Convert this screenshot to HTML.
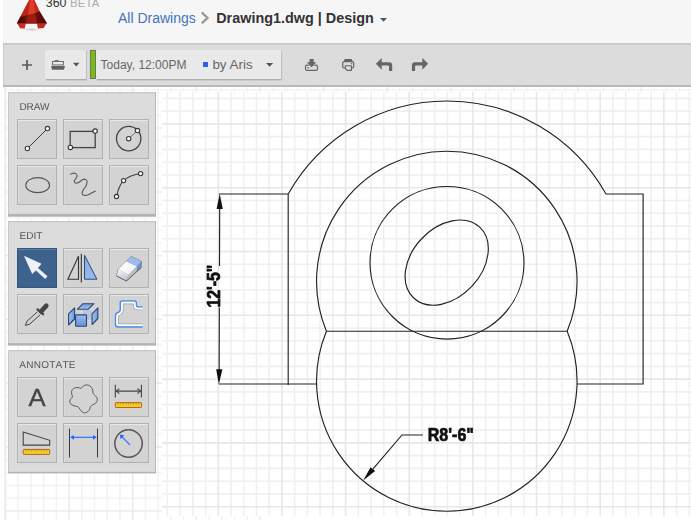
<!DOCTYPE html>
<html lang="en">
<head>
<meta charset="utf-8">
<title>AutoCAD 360 - Drawing1.dwg</title>
<style>
html,body{margin:0;padding:0;}
body{width:691px;height:520px;overflow:hidden;background:#fff;position:relative;font-family:"Liberation Sans",Arial,sans-serif;}
.abs{position:absolute;}
#cv{position:absolute;left:0;top:0;width:691px;height:520px;}
#header{position:absolute;left:3px;top:0;width:688px;height:43px;background:#f6f6f6;}
#hline{position:absolute;left:3px;top:42.5px;width:688px;height:2px;background:#cbcbcb;}
#toolbar{position:absolute;left:3px;top:44.5px;width:688px;height:40px;background:#dcdcdc;border-bottom:2px solid #b9b9b9;box-shadow:inset 1px 0 0 #cdcdcd;}
.t{position:absolute;white-space:nowrap;line-height:1;}
.tbtn{position:absolute;top:50px;height:29px;background:#e9e9e9;box-shadow:0.5px 1px 1.5px rgba(0,0,0,0.35);}
.panel{position:absolute;left:8px;width:146px;height:120px;border:1px solid transparent;}
.plabel{position:absolute;left:10.5px;top:8.4px;font-size:10px;line-height:10px;color:#555;transform:scale(1,0.96);transform-origin:0 100%;}
.b{position:absolute;width:38px;height:38px;background:#d3d3d3;border:1px solid #b2b2b2;box-shadow:inset 0 1px 0 rgba(255,255,255,0.5), inset 1px 0 0 rgba(255,255,255,0.15);}
.b svg{position:absolute;left:-1px;top:-1px;width:40px;height:40px;overflow:visible;}
.c1{left:8px}.c2{left:54px}.c3{left:100px}
.r1{top:26px}.r2{top:72px}
.sel{background:#3d628d;border-color:#33557e;box-shadow:inset 0 1px 0 rgba(255,255,255,0.18);}
</style>
</head>
<body>
<svg id="cv" viewBox="0 0 691 520">
<rect x="0" y="0" width="691" height="520" fill="#fff"/>
<path d="M18.22 86V520M30.94 86V520M43.66 86V520M56.38 86V520M81.82 86V520M94.54 86V520M107.26 86V520M119.98 86V520M145.42 86V520M158.14 86V520M170.86 86V520M183.58 86V520M209.02 86V520M221.74 86V520M234.46 86V520M247.18 86V520M272.62 86V520M285.34 86V520M298.06 86V520M310.78 86V520M336.22 86V520M348.94 86V520M361.66 86V520M374.38 86V520M399.82 86V520M412.54 86V520M425.26 86V520M437.98 86V520M463.42 86V520M476.14 86V520M488.86 86V520M501.58 86V520M527.02 86V520M539.74 86V520M552.46 86V520M565.18 86V520M590.62 86V520M603.34 86V520M616.06 86V520M628.78 86V520M654.22 86V520M666.94 86V520M679.66 86V520M4.5 89.82H691M4.5 102.58H691M4.5 115.34H691M4.5 140.86H691M4.5 153.62H691M4.5 166.38H691M4.5 179.14H691M4.5 204.66H691M4.5 217.42H691M4.5 230.18H691M4.5 242.94H691M4.5 268.46H691M4.5 281.22H691M4.5 293.98H691M4.5 306.74H691M4.5 332.26H691M4.5 345.02H691M4.5 357.78H691M4.5 370.54H691M4.5 396.06H691M4.5 408.82H691M4.5 421.58H691M4.5 434.34H691M4.5 459.86H691M4.5 472.62H691M4.5 485.38H691M4.5 498.14H691" stroke="#f3f3f3" stroke-width="1.5" fill="none"/>
<path d="M5.5 86V520M69.1 86V520M132.7 86V520M196.3 86V520M259.9 86V520M323.5 86V520M387.1 86V520M450.7 86V520M514.3 86V520M577.9 86V520M641.5 86V520M4.5 128.1H691M4.5 191.9H691M4.5 255.7H691M4.5 319.5H691M4.5 383.3H691M4.5 447.1H691M4.5 510.9H691" stroke="#ebebeb" stroke-width="1.5" fill="none"/>
<rect x="0" y="86" width="4.4" height="434" fill="#fff"/>
<rect x="4.2" y="86" width="1.2" height="434" fill="#eeeeee"/>
<rect x="162" y="92" width="529" height="424" fill="#fff"/>
<rect x="264" y="516" width="427" height="4" fill="#fff"/>
<path d="M167.38 92V516M180.11 92V516M192.84 92V516M205.57 92V516M231.03 92V516M243.76 92V516M256.49 92V516M269.22 92V516M294.68 92V516M307.41 92V516M320.14 92V516M332.87 92V516M358.33 92V516M371.06 92V516M383.79 92V516M396.52 92V516M421.98 92V516M434.71 92V516M447.44 92V516M460.17 92V516M485.63 92V516M498.36 92V516M511.09 92V516M523.82 92V516M549.28 92V516M562.01 92V516M574.74 92V516M587.47 92V516M612.93 92V516M625.66 92V516M638.39 92V516M651.12 92V516M676.58 92V516M689.31 92V516M162 98.38H691M162 111.14H691M162 136.66H691M162 149.42H691M162 162.18H691M162 174.94H691M162 200.46H691M162 213.22H691M162 225.98H691M162 238.74H691M162 264.26H691M162 277.02H691M162 289.78H691M162 302.54H691M162 328.06H691M162 340.82H691M162 353.58H691M162 366.34H691M162 391.86H691M162 404.62H691M162 417.38H691M162 430.14H691M162 455.66H691M162 468.42H691M162 481.18H691M162 493.94H691" stroke="#f0f0f0" stroke-width="1.6" fill="none"/>
<path d="M218.3 92V516M281.95 92V516M345.6 92V516M409.25 92V516M472.9 92V516M536.55 92V516M600.2 92V516M663.85 92V516M162 123.9H691M162 187.7H691M162 251.5H691M162 315.3H691M162 379.1H691M162 442.9H691M162 506.7H691" stroke="#e7e7e7" stroke-width="1.6" fill="none"/>
<path d="M219 194H288.2M288.2 194A182.23 182.23 0 0 1 606 194H643.1V384H577.02M288.2 194V385M219 384H316.58M326.43 331.25A130.25 130.25 0 1 1 567.17 331.25M326.43 331.25A130.25 130.25 0 1 0 567.17 331.25M326.43 331.25H567.17" stroke="#222" stroke-width="1.15" fill="none"/>
<ellipse cx="447" cy="262.8" rx="77" ry="76.3" stroke="#222" stroke-width="1.15" fill="none"/>
<ellipse cx="446.7" cy="262.6" rx="48.4" ry="34.6" transform="rotate(-47 446.7 262.6)" stroke="#222" stroke-width="1.15" fill="none"/>
<path d="M219.7 200L219.5 266M219.35 307.5L219.1 378" stroke="#222" stroke-width="1.15" fill="none"/>
<path d="M219.7 193.8L216.6 209H222.8ZM218.8 384.5L216.2 369.2H222.4Z" fill="#111"/>
<path d="M372.82 469.15L402 435H422.9" stroke="#222" stroke-width="1.15" fill="none"/>
<path d="M363.2 480.4L375.1 471.1L370.53 467.2Z" fill="#111"/>
<rect x="8" y="92.2" width="148" height="124.5" fill="#b3b3b3"/><rect x="8" y="92.2" width="148" height="121.6" fill="#c8c8c8"/><rect x="9" y="93.2" width="146" height="120.6" fill="#dcdcdc"/><rect x="155" y="92.2" width="1" height="121.6" fill="#b6b6b6"/>
<rect x="8" y="221.3" width="148" height="124.3" fill="#b3b3b3"/><rect x="8" y="221.3" width="148" height="121.8" fill="#c8c8c8"/><rect x="9" y="222.3" width="146" height="120.8" fill="#dcdcdc"/><rect x="155" y="221.3" width="1" height="121.8" fill="#b6b6b6"/>
<rect x="8" y="350.3" width="148" height="123.1" fill="#b3b3b3"/><rect x="8" y="350.3" width="148" height="121.4" fill="#c8c8c8"/><rect x="9" y="351.3" width="146" height="120.4" fill="#dcdcdc"/><rect x="155" y="350.3" width="1" height="121.4" fill="#b6b6b6"/>
</svg>
<svg id="cvt" viewBox="0 0 691 520" style="position:absolute;left:0;top:0;width:691px;height:520px;will-change:transform;">
<text transform="translate(219.8 307.5) rotate(-90) scale(1 1.21)" font-family="Liberation Sans, Arial, sans-serif" font-weight="bold" font-size="15.8" fill="#111" stroke="#111" stroke-width="0.6">12'-5"</text>
<text transform="translate(427.8 441.2) scale(1.015 1.21)" font-family="Liberation Sans, Arial, sans-serif" font-weight="bold" font-size="15.8" fill="#111" stroke="#111" stroke-width="0.6">R8'-6"</text>
</svg>

<div id="header">
  <svg class="abs" style="left:12px;top:0" width="40" height="34" viewBox="15 0 40 34">
    <defs><linearGradient id="lgd" x1="0" y1="0" x2="1" y2="0"><stop offset="0" stop-color="#3d0704"/><stop offset="1" stop-color="#74130b"/></linearGradient>
    <linearGradient id="lgr" x1="0" y1="0" x2="1" y2="0"><stop offset="0" stop-color="#6a100a"/><stop offset="1" stop-color="#4a0905"/></linearGradient>
    <radialGradient id="lgs" cx="0.5" cy="0.5" r="0.5"><stop offset="0" stop-color="#bdbdbd"/><stop offset="1" stop-color="#f6f6f6" stop-opacity="0"/></radialGradient></defs>
    <ellipse cx="31.5" cy="29.6" rx="13" ry="1.9" fill="url(#lgs)"/>
    <path d="M29.17 0H34.22L39.61 11.45L35.23 13.4L27.82 15.4L20.42 16.84Z" fill="#c92d1c"/>
    <path d="M17.05 23.23L20.42 16.84L27.82 15.15L35.23 13.13L39.61 11.45L46.68 23.23Z" fill="#6a100a"/>
    <path d="M29.85 0H33.55L35.23 13.13L27.82 15.15Z" fill="#e03d28" stroke="#e03d28" stroke-width="0.3"/>
    <path d="M29.17 0H29.85L27.82 15.15L20.42 16.84Z" fill="#bc2617"/>
    <path d="M33.55 0H34.22L39.61 11.45L35.23 13.13Z" fill="#c12a1a"/>
    <path d="M17.05 23.23L20.42 16.84L27.82 15.15L25.8 23.23Z" fill="url(#lgd)" stroke="#5a0d07" stroke-width="0.3"/>
    <path d="M35.23 13.13L39.61 11.45L46.68 23.23H36.92Z" fill="url(#lgr)" stroke="#5a0d07" stroke-width="0.3"/>
    <path d="M27.82 15.15L35.23 13.13L36.92 23.23H25.8Z" fill="#9b1c10" stroke="#9b1c10" stroke-width="0.3"/>
    <path d="M17.05 23.1H25.8L24.79 28.62L20.08 28.28Z" fill="#cd2f1d"/>
    <path d="M46.68 23.1H36.92L37.93 28.62L43.65 27.95Z" fill="#c32a19"/>
    <path d="M17.05 23.23H46.68" stroke="#6a100a" stroke-width="0.5"/>
  </svg>
  <div class="t" style="left:42.8px;top:-2.7px;font-size:12.4px;color:#333;">360 <span style="font-size:11.4px;color:#ababab;letter-spacing:0.2px;">BETA</span></div>
  <div class="t" style="left:115px;top:10.6px;font-size:14px;color:#4474ba;">All Drawings</div>
  <svg class="abs" style="left:197px;top:11px" width="10" height="14" viewBox="0 0 10 14"><path d="M1.7 1.4L7.6 6.9L1.7 12.4" stroke="#999" stroke-width="2.2" fill="none"/></svg>
  <div class="t" style="left:213.2px;top:10.5px;font-size:14.4px;font-weight:bold;color:#333;">Drawing1.dwg | Design</div>
  <svg class="abs" style="left:375.6px;top:16.5px" width="10" height="6" viewBox="0 0 10 6"><path d="M1 1H8L4.5 4.8Z" fill="#555"/></svg>
</div>
<div id="hline"></div>
<div id="toolbar"></div>

<!-- toolbar content -->
<svg class="abs" style="left:20px;top:58px" width="14" height="14" viewBox="0 0 14 14"><path d="M7 2V12M2 7H12" stroke="#5a5a5a" stroke-width="1.7" fill="none"/></svg>
<div class="tbtn" style="left:45px;width:41px;">
  <svg class="abs" style="left:5px;top:9px" width="31" height="12" viewBox="50 59 31 12">
    <path d="M54.6 60.5H58.6" stroke="#777" stroke-width="1" fill="none"/>
    <rect x="52.55" y="61.45" width="10.9" height="3.5" fill="none" stroke="#666" stroke-width="0.95"/>
    <path d="M51 66H65L64 69.8H52Z" fill="#636363"/>
    <path d="M72.9 62.8H79.5L76.2 66.5Z" fill="#555"/>
  </svg>
</div>
<svg class="abs" style="left:89px;top:49px" width="8" height="31" viewBox="89 49 8 31"><rect x="90.4" y="50.4" width="5.1" height="28.1" fill="#76bf0b" stroke="#6a6572" stroke-width="0.9"/></svg>
<div class="tbtn" style="left:96px;width:185px;">
  <div class="t" style="left:4.6px;top:8.6px;font-size:12px;color:#666;">Today, 12:00PM</div>
  <div class="abs" style="left:107px;top:12px;width:5px;height:5px;background:#2a63e6;"></div>
  <div class="t" style="left:116.4px;top:7.9px;font-size:13.4px;color:#666;">by Aris</div>
  <svg class="abs" style="left:169px;top:12px" width="10" height="6" viewBox="0 0 10 6"><path d="M1 1H8.2L4.6 4.8Z" fill="#555"/></svg>
</div>
<!-- download -->
<svg class="abs" style="left:303px;top:57px" width="18" height="16" viewBox="303 57 18 16">
  <rect x="305.5" y="65.2" width="12" height="5.1" rx="1.2" fill="none" stroke="#666" stroke-width="1.2"/>
  <path d="M309.5 59H313.7V62.3H316.4L311.6 67.2L306.8 62.3H309.5Z" fill="#666" stroke="#dcdcdc" stroke-width="1" paint-order="stroke"/>
  <path d="M307.2 67.7H309.2" stroke="#666" stroke-width="1"/>
</svg>
<!-- print -->
<svg class="abs" style="left:340px;top:57px" width="18" height="16" viewBox="340 57 18 16">
  <path d="M344.6 59H351.8L352.6 61.2H343.8Z" fill="#666"/>
  <rect x="342.7" y="61.6" width="11" height="6.4" rx="1.6" fill="none" stroke="#666" stroke-width="1.2"/>
  <path d="M345.3 65.8H351.4V70.4H347.3L345.3 68.4Z" fill="#dcdcdc" stroke="#666" stroke-width="1.1"/>
  <rect x="351" y="63" width="1.2" height="1.2" fill="#666"/>
</svg>
<!-- undo -->
<svg class="abs" style="left:374px;top:56px" width="20" height="17" viewBox="374 56 20 17">
  <path d="M375.9 63.7L381.7 57.9V62.2H389.2A3 3 0 0 1 392.2 65.2V71H389V66.4A1 1 0 0 0 388 65.4H381.7V69.8Z" fill="#666"/>
</svg>
<!-- redo -->
<svg class="abs" style="left:410px;top:56px" width="20" height="17" viewBox="410 56 20 17">
  <path d="M428.1 63.7L422.3 57.9V62.2H414.9A3 3 0 0 0 411.9 65.2V71H415.1V66.4A1 1 0 0 1 416.1 65.4H422.3V69.8Z" fill="#666"/>
</svg>

<!-- DRAW panel -->
<div class="panel" style="top:92px;">
  <svg class="abs" style="left:0;top:0;overflow:visible" width="146" height="24"><text x="10.5" y="17.0" font-family="Liberation Sans, Arial, sans-serif" font-size="10" fill="#555" text-rendering="geometricPrecision" letter-spacing="-0.1">DRAW</text></svg>
  <div class="b c1 r1"><svg viewBox="0 0 40 40"><path d="M10.4 29.5L30.5 9.6" stroke="#3a3a3a" stroke-width="1"/><circle cx="10.4" cy="29.5" r="2.2" fill="#fff" stroke="#3a3a3a" stroke-width="1.1"/><circle cx="30.5" cy="9.6" r="2.2" fill="#fff" stroke="#3a3a3a" stroke-width="1.1"/></svg></div>
  <div class="b c2 r1"><svg viewBox="0 0 40 40"><rect x="7.2" y="12.4" width="25" height="16.2" fill="none" stroke="#444" stroke-width="1.3"/><circle cx="7.4" cy="28.4" r="2.2" fill="#fff" stroke="#333" stroke-width="1.1"/><circle cx="32.1" cy="12.1" r="2.2" fill="#fff" stroke="#333" stroke-width="1.1"/></svg></div>
  <div class="b c3 r1"><svg viewBox="0 0 40 40"><circle cx="19.7" cy="19.6" r="12.2" fill="none" stroke="#444" stroke-width="1.3"/><path d="M19.7 19.7L28.5 11.6" stroke="#666" stroke-width="0.9"/><circle cx="19.7" cy="19.7" r="2.2" fill="#fff" stroke="#3a3a3a" stroke-width="1.1"/><circle cx="28.5" cy="11.6" r="2.2" fill="#fff" stroke="#3a3a3a" stroke-width="1.1"/></svg></div>
  <div class="b c1 r2"><svg viewBox="0 0 40 40"><ellipse cx="20.65" cy="20.15" rx="11.9" ry="7.5" fill="none" stroke="#555" stroke-width="1.1"/></svg></div>
  <div class="b c2 r2"><svg viewBox="0 0 40 40"><path d="M7.22 9.31C7.69 9.12 9.07 8.31 10.00 8.19C10.93 8.08 12.08 8.17 12.78 8.61C13.47 9.05 14.17 10.00 14.17 10.83C14.17 11.67 13.26 12.73 12.78 13.61C12.29 14.49 11.32 15.37 11.25 16.11C11.18 16.85 11.64 17.82 12.36 18.06C13.08 18.29 14.44 18.01 15.56 17.50C16.67 16.99 17.94 15.56 19.03 15.00C20.12 14.44 21.25 13.94 22.08 14.17C22.92 14.40 23.84 15.32 24.03 16.39C24.21 17.45 23.80 19.17 23.19 20.56C22.59 21.94 21.11 23.47 20.42 24.72C19.72 25.97 18.98 27.13 19.03 28.06C19.07 28.98 19.77 29.95 20.69 30.28C21.62 30.60 23.19 30.42 24.58 30.00C25.97 29.58 27.69 28.45 29.03 27.78C30.37 27.11 32.04 26.27 32.64 25.97" fill="none" stroke="#555" stroke-width="1.1"/></svg></div>
  <div class="b c3 r2"><svg viewBox="0 0 40 40"><path d="M7.5 31.5C9.3 22.5 12.3 18 14.6 15.6C19.3 11.4 25.3 9.3 31.6 8.6" fill="none" stroke="#444" stroke-width="1.1"/><circle cx="7.5" cy="31.5" r="2.1" fill="#fff" stroke="#333" stroke-width="1.1"/><circle cx="14.6" cy="15.6" r="2.1" fill="#fff" stroke="#333" stroke-width="1.1"/><circle cx="31.6" cy="8.6" r="2.1" fill="#fff" stroke="#333" stroke-width="1.1"/></svg></div>
</div>

<!-- EDIT panel -->
<div class="panel" style="top:221.2px;">
  <svg class="abs" style="left:0;top:0;overflow:visible" width="146" height="24"><text x="10.5" y="16.9" font-family="Liberation Sans, Arial, sans-serif" font-size="10" fill="#555" text-rendering="geometricPrecision" >EDIT</text></svg>
  <div class="b c1 r1 sel"><svg viewBox="0 0 40 40"><path d="M6.9 7.7L24.5 15.7L21 20L30.5 28.3L28.2 31.1L18.9 22.6L15.2 25.9Z" fill="#eef2f7"/></svg></div>
  <div class="b c2 r1"><svg viewBox="0 0 40 40"><defs><linearGradient id="gm" x1="0" y1="0" x2="1" y2="1"><stop offset="0" stop-color="#88afe3"/><stop offset="1" stop-color="#9cbde9"/></linearGradient></defs><path d="M15.5 8.3V31.2H4.9L15.5 8.3Z" fill="none" stroke="#333" stroke-width="1.1"/><path d="M18.3 5.8V34.6" stroke="#333" stroke-width="1.1"/><path d="M21.5 7.3V31.2H33.9Z" fill="url(#gm)" stroke="#2b4a80" stroke-width="1"/></svg></div>
  <div class="b c3 r1"><svg viewBox="0 0 40 40"><defs><linearGradient id="ge" x1="0" y1="0" x2="1" y2="1"><stop offset="0" stop-color="#ffffff"/><stop offset="1" stop-color="#eceef2"/></linearGradient><linearGradient id="ge2" x1="0" y1="0" x2="0.3" y2="1"><stop offset="0" stop-color="#f4f5f8"/><stop offset="1" stop-color="#c4c9d1"/></linearGradient></defs>
    <g transform="translate(0.7 0.7)"><path d="M8.6 20.6L21.5 7.85L31.7 12.65L31.4 18.9L16.6 32.3L6.9 27.2Z" fill="#8b9098" stroke="#6b7078" stroke-width="0.9" stroke-linejoin="round"/>
    <path d="M8.6 20.6L18.7 26.1L16.6 32.3L6.9 27.2Z" fill="url(#ge2)"/>
    <path d="M18.7 26.1L27.2 17.5L27.2 22.6L16.6 32.3Z" fill="#b9bdc5"/>
    <path d="M27.2 17.5L31.7 12.65L31.4 18.9L27.2 22.6Z" fill="#6e93cb"/>
    <path d="M8.6 20.6L16.6 12.5L27.2 17.5L18.7 26.1Z" fill="url(#ge)"/>
    <path d="M16.6 12.5L21.5 7.85L31.7 12.65L27.2 17.5Z" fill="#9dbce8"/>
    <path d="M6.9 27.2L16.6 32.3L31.4 18.9" fill="none" stroke="#4a4e55" stroke-width="0.7"/></g>
  </svg></div>
  <div class="b c1 r2"><svg viewBox="0 0 40 40">
    <path d="M20.4 17.8L9.8 27.4L8.4 31.4L12.5 30.3L23.3 20.6" fill="none" stroke="#333" stroke-width="0.9"/>
    <path d="M20.5 15.4L26.1 20.2" stroke="#454545" stroke-width="2.3" stroke-linecap="round"/>
    <path d="M24.2 17.4L29.3 11.7" stroke="#454545" stroke-width="4.7" stroke-linecap="round"/>
  </svg></div>
  <div class="b c2 r2"><svg viewBox="0 0 40 40"><defs><linearGradient id="gb" x1="0" y1="0" x2="0" y2="1"><stop offset="0" stop-color="#9dbfec"/><stop offset="1" stop-color="#5f92d8"/></linearGradient><linearGradient id="gb2" x1="0" y1="0" x2="0" y2="1"><stop offset="0" stop-color="#6f9bd9"/><stop offset="1" stop-color="#a4c2ea"/></linearGradient><linearGradient id="gb3" x1="0" y1="0" x2="1" y2="0"><stop offset="0" stop-color="#a9c5eb"/><stop offset="1" stop-color="#6c98d6"/></linearGradient></defs>
    <g transform="translate(0.5 0.5)"><rect x="18.5" y="14.8" width="11" height="11" fill="#b7c6db" stroke="#dde3eb" stroke-width="0.9"/>
    <path d="M13.85 14.8L19.4 9.2H30.5L24.5 14.8Z" fill="url(#gb2)" stroke="#2a4478" stroke-width="1.1" stroke-linejoin="round"/>
    <path d="M5.1 19.4L11.1 13.4V24.5L5.1 30.5Z" fill="url(#gb3)" stroke="#2a4478" stroke-width="1.1" stroke-linejoin="round"/>
    <path d="M28.6 19.4L34.4 13.4V24L28.6 30Z" fill="url(#gb3)" stroke="#2a4478" stroke-width="1.1" stroke-linejoin="round"/>
    <rect x="12.1" y="20.4" width="10.9" height="11.4" rx="0.6" fill="url(#gb)" stroke="#2a4478" stroke-width="1.1"/>
  </g></svg></div>
  <div class="b c3 r2"><svg viewBox="0 0 40 40">
    <g transform="translate(0.2 0.4)">
    <path d="M33.5 12.6H29Q27.2 12.6 27.2 10.8V8.3Q27.2 6.5 25.4 6.5H13Q11.1 6.5 11.1 8.3V15Q11.1 17.5 8.8 18.1Q6.3 18.8 6.3 21.4V30Q6.3 32.5 9 32.5H33.5" fill="none" stroke="#4a8ff0" stroke-width="1.5"/>
    <path d="M33.5 15.4H27.6Q24.2 15.4 24.2 12V10.2Q24.2 9.6 23.6 9.6H14.8Q14.2 9.6 14.2 10.2V16.2Q14.2 19.6 10.8 20.6Q9.4 21 9.4 22.4V29.4H33.5" fill="none" stroke="#8d8d8d" stroke-width="0.9" opacity="0.55"/>
    <path d="M33.5 14.1H28.6Q25.6 14.1 25.6 11.2V9Q25.6 8.1 24.8 8.1H13.6Q12.7 8.1 12.7 9V15.4Q12.7 18.6 9.6 19.5Q7.9 20 7.9 21.8V29.6Q7.9 30.9 9.4 30.9H33.5" fill="none" stroke="#ffffff" stroke-width="1.6"/>
    </g>
  </svg></div>
</div>

<!-- ANNOTATE panel -->
<div class="panel" style="top:350.4px;">
  <svg class="abs" style="left:0;top:0;overflow:visible" width="146" height="24"><text x="10.3" y="16.7" font-family="Liberation Sans, Arial, sans-serif" font-size="10" fill="#555" text-rendering="geometricPrecision" style="font-kerning:none" letter-spacing="0.25">ANNOTATE</text></svg>
  <div class="b c1 r1"><svg viewBox="0 0 40 40"><text transform="translate(11.5 28.9) scale(1.07 1)" font-family="Liberation Sans, Arial, sans-serif" font-size="24" fill="#454545" stroke="#454545" stroke-width="0.3">A</text></svg></div>
  <div class="b c2 r1"><svg viewBox="0 0 40 40"><path transform="translate(0.8 0.8)" d="M17.54 10.43C18.16 10.13 18.54 8.86 19.39 8.31C20.24 7.76 21.55 7.16 22.62 7.11C23.70 7.06 24.85 7.37 25.85 8.03C26.85 8.69 28.09 10.03 28.62 11.08C29.16 12.13 28.86 13.39 29.09 14.31C29.32 15.24 29.39 15.77 30.01 16.62C30.62 17.47 32.19 18.39 32.78 19.39C33.36 20.39 33.67 21.62 33.52 22.62C33.36 23.62 32.67 24.62 31.86 25.39C31.04 26.16 29.47 26.70 28.62 27.24C27.78 27.78 27.24 27.93 26.78 28.62C26.32 29.32 26.32 30.52 25.85 31.39C25.39 32.27 24.82 33.27 24.01 33.89C23.19 34.50 21.88 35.04 20.96 35.09C20.04 35.13 19.27 34.78 18.47 34.16C17.67 33.55 16.85 32.24 16.16 31.39C15.47 30.55 15.00 29.59 14.31 29.09C13.62 28.58 13.00 28.65 12.00 28.35C11.00 28.04 9.31 27.89 8.31 27.24C7.31 26.59 6.31 25.39 6.00 24.47C5.69 23.55 6.03 22.55 6.46 21.70C6.89 20.85 8.33 20.24 8.59 19.39C8.85 18.54 8.16 17.62 8.03 16.62C7.91 15.62 7.60 14.36 7.85 13.39C8.09 12.42 8.66 11.42 9.51 10.80C10.36 10.19 11.90 9.80 12.93 9.70C13.96 9.59 14.93 10.03 15.70 10.16C16.47 10.28 16.93 10.74 17.54 10.43Z" fill="none" stroke="#5a5a5a" stroke-width="1"/></svg></div>
  <div class="b c3 r1"><svg viewBox="0 0 40 40">
    <path d="M6.3 7.8V20.4M32.4 7.8V20.4M7 14.1H31.7" stroke="#444" stroke-width="1.1" fill="none"/>
    <path d="M10.4 11.6L7.1 14.1L10.4 16.6M28.3 11.6L31.6 14.1L28.3 16.6" fill="none" stroke="#444" stroke-width="1.1"/>
    <rect x="6.3" y="25.6" width="26.2" height="4.9" rx="0.7" fill="#f6cb2e" stroke="#b06a14" stroke-width="1"/>
    <path d="M9 26V27.8M11.6 26V27.4M14.2 26V27.8M16.8 26V27.4M19.4 26V27.8M22 26V27.4M24.6 26V27.8M27.2 26V27.4M29.8 26V27.8" stroke="#c98a20" stroke-width="1"/>
  </svg></div>
  <div class="b c1 r2"><svg viewBox="0 0 40 40">
    <path d="M6.2 8.9L32.7 17.3V22.1H6.2Z" fill="none" stroke="#444" stroke-width="1.1"/>
    <rect x="6.2" y="26.4" width="26.5" height="5" rx="0.7" fill="#f6cb2e" stroke="#b06a14" stroke-width="1"/>
    <path d="M9 26.7V28.5M11.6 26.7V28.1M14.2 26.7V28.5M16.8 26.7V28.1M19.4 26.7V28.5M22 26.7V28.1M24.6 26.7V28.5M27.2 26.7V28.1M29.8 26.7V28.5" stroke="#c98a20" stroke-width="1"/>
  </svg></div>
  <div class="b c2 r2"><svg viewBox="0 0 40 40">
    <path d="M6.5 5.6V34.5M34.5 5.6V34.5" stroke="#3a3a3a" stroke-width="1"/>
    <path d="M8.4 14.3H32.8" stroke="#1b6bff" stroke-width="1.1"/>
    <path d="M7.2 14.3L11 11.9V16.7ZM33.8 14.3L30 11.9V16.7Z" fill="#1b6bff"/>
  </svg></div>
  <div class="b c3 r2"><svg viewBox="0 0 40 40">
    <circle cx="19.55" cy="20.5" r="13.7" fill="none" stroke="#555" stroke-width="1.5"/>
    <path d="M21 21.8L12.8 13.7" stroke="#1b6bff" stroke-width="1.1"/>
    <path d="M10.8 11.8L15.4 12.3L11.4 16.1Z" fill="#1b6bff"/>
  </svg></div>
</div>
</body>
</html>
